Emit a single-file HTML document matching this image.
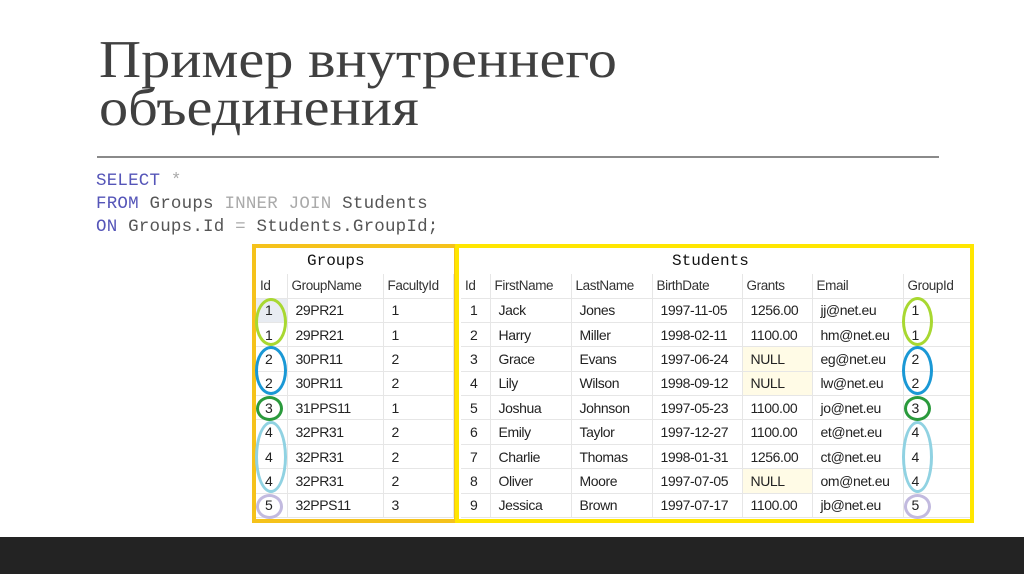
<!DOCTYPE html>
<html><head><meta charset="utf-8"><style>
*{margin:0;padding:0;box-sizing:border-box}
body{width:1024px;height:574px;background:#fff;position:relative;overflow:hidden;font-family:"Liberation Sans",sans-serif}
.t{position:absolute;left:99px;top:36px;font-family:"Liberation Serif","DejaVu Serif",serif;font-size:53px;line-height:48px;color:#404040;transform:scaleX(1.1);transform-origin:0 0;white-space:nowrap}
.hr{position:absolute;left:97px;top:156px;width:842px;height:2px;background:#8a8a8a}
.sql{position:absolute;left:96px;top:170px;font-family:"Liberation Mono",monospace;font-size:17.5px;line-height:23px;color:#555;letter-spacing:0.2px}
.k{color:#5555b8}.g{color:#aaa}
.box{position:absolute;border:4px solid}
table{position:absolute;border-collapse:collapse;table-layout:fixed;font-size:14px;color:#222;letter-spacing:-0.4px}
td{height:24.4px;border-right:1px solid #e6e6e6;border-bottom:1px solid #e6e6e6;padding-left:8px;white-space:nowrap;overflow:hidden;background:#fff}
td:first-child{padding-left:9px}
tr.h td{height:24px;font-size:13.5px;color:#333;padding-left:4px}
td.n{background:#fffbe6}
.cap{position:absolute;font-family:"Liberation Mono",monospace;font-size:16px;color:#111}
.e{position:absolute;border:3px solid;border-radius:50%}
.bar{position:absolute;left:0;top:537px;width:1024px;height:37px;background:#232323}
</style></head><body>
<div class="t">Пример внутреннего<br>объединения</div>
<div class="hr"></div>
<div class="sql"><span class="k">SELECT</span> <span class="g">*</span><br><span class="k">FROM</span> Groups <span class="g">INNER JOIN</span> Students<br><span class="k">ON</span> Groups.Id <span class="g">=</span> Students.GroupId;</div>

<div class="cap" style="left:307px;top:252px">Groups</div>
<div class="cap" style="left:672px;top:252px">Students</div>

<table style="left:256px;top:274px;width:197px">
<colgroup><col style="width:31px"><col style="width:96px"><col style="width:70px"></colgroup>
<tr class="h"><td>Id</td><td>GroupName</td><td>FacultyId</td></tr>
<tr><td style="background:#e8ecf2">1</td><td>29PR21</td><td>1</td></tr>
<tr><td>1</td><td>29PR21</td><td>1</td></tr>
<tr><td>2</td><td>30PR11</td><td>2</td></tr>
<tr><td>2</td><td>30PR11</td><td>2</td></tr>
<tr><td>3</td><td>31PPS11</td><td>1</td></tr>
<tr><td>4</td><td>32PR31</td><td>2</td></tr>
<tr><td>4</td><td>32PR31</td><td>2</td></tr>
<tr><td>4</td><td>32PR31</td><td>2</td></tr>
<tr><td>5</td><td>32PPS11</td><td>3</td></tr>
</table>

<table style="left:461px;top:274px;width:509px">
<colgroup><col style="width:29px"><col style="width:81px"><col style="width:81px"><col style="width:90px"><col style="width:70px"><col style="width:91px"><col style="width:67px"></colgroup>
<tr class="h"><td>Id</td><td>FirstName</td><td>LastName</td><td>BirthDate</td><td>Grants</td><td>Email</td><td>GroupId</td></tr>
<tr><td>1</td><td>Jack</td><td>Jones</td><td>1997-11-05</td><td>1256.00</td><td>jj@net.eu</td><td>1</td></tr>
<tr><td>2</td><td>Harry</td><td>Miller</td><td>1998-02-11</td><td>1100.00</td><td>hm@net.eu</td><td>1</td></tr>
<tr><td>3</td><td>Grace</td><td>Evans</td><td>1997-06-24</td><td class="n">NULL</td><td>eg@net.eu</td><td>2</td></tr>
<tr><td>4</td><td>Lily</td><td>Wilson</td><td>1998-09-12</td><td class="n">NULL</td><td>lw@net.eu</td><td>2</td></tr>
<tr><td>5</td><td>Joshua</td><td>Johnson</td><td>1997-05-23</td><td>1100.00</td><td>jo@net.eu</td><td>3</td></tr>
<tr><td>6</td><td>Emily</td><td>Taylor</td><td>1997-12-27</td><td>1100.00</td><td>et@net.eu</td><td>4</td></tr>
<tr><td>7</td><td>Charlie</td><td>Thomas</td><td>1998-01-31</td><td>1256.00</td><td>ct@net.eu</td><td>4</td></tr>
<tr><td>8</td><td>Oliver</td><td>Moore</td><td>1997-07-05</td><td class="n">NULL</td><td>om@net.eu</td><td>4</td></tr>
<tr><td>9</td><td>Jessica</td><td>Brown</td><td>1997-07-17</td><td>1100.00</td><td>jb@net.eu</td><td>5</td></tr>
</table>

<div class="box" style="left:252px;top:244px;width:206px;height:279px;border-color:#f5c21b"></div>
<div class="box" style="left:455px;top:244px;width:519px;height:279px;border-color:#ffe600"></div>

<div class="e" style="left:255px;top:298px;width:32px;height:48px;border-color:#a8d831"></div>
<div class="e" style="left:255px;top:346px;width:32px;height:49px;border-color:#1a98d5"></div>
<div class="e" style="left:256px;top:396px;width:27px;height:25px;border-color:#2a9a3c"></div>
<div class="e" style="left:255px;top:421px;width:32px;height:72px;border-color:#90d2e2"></div>
<div class="e" style="left:256px;top:494px;width:27px;height:25px;border-color:#c2badf"></div>

<div class="e" style="left:902px;top:297px;width:31px;height:49px;border-color:#a8d831"></div>
<div class="e" style="left:902px;top:346px;width:31px;height:49px;border-color:#1a98d5"></div>
<div class="e" style="left:904px;top:396px;width:27px;height:25px;border-color:#2a9a3c"></div>
<div class="e" style="left:902px;top:421px;width:31px;height:72px;border-color:#90d2e2"></div>
<div class="e" style="left:904px;top:494px;width:27px;height:25px;border-color:#c2badf"></div>

<div class="bar"></div>
</body></html>
